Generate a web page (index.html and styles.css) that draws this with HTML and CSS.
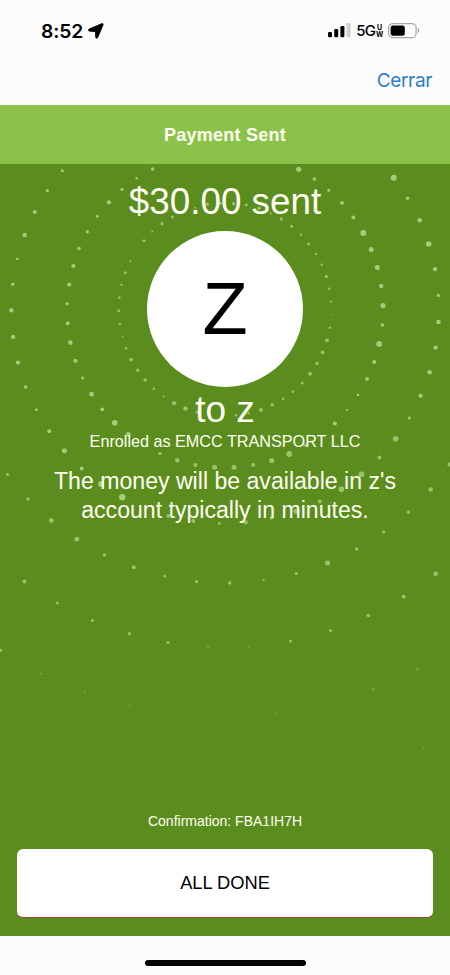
FILE: index.html
```html
<!DOCTYPE html>
<html lang="es">
<head>
<meta charset="utf-8">
<meta name="viewport" content="width=device-width, initial-scale=1">
<title>Payment Sent</title>
<link rel="stylesheet" href="styles.css">
</head>
<body>
<div class="phone">
  <header class="status">
    <div class="clock"><span class="time">8:52</span>
      <svg class="arrow" width="16" height="16" viewBox="0 0 16 16"><path d="M13.8.7 1.2 6.1C.2 6.6.4 8 1.5 8.1l5.7.3.4.4.2 5.5c.1 1.1 1.3 1.3 1.8.3L15 1.9c.4-.9-.3-1.6-1.2-1.2Z"/></svg>
    </div>
    <div class="signals">
      <svg class="bars" width="23" height="16" viewBox="0 0 23 16"><rect y="9" width="4" height="5.3" rx="1.2"/><rect x="6.2" y="6" width="4" height="8.3" rx="1.2"/><rect x="12.4" y="3" width="4" height="11.3" rx="1.2"/><rect class="weak" x="18.6" width="4" height="14.3" rx="1.2"/></svg>
      <span class="network">5G</span><span class="uw"><span>U</span><span>W</span></span>
      <svg class="battery" width="32" height="16" viewBox="0 0 32 16"><rect class="shell" x=".6" y=".6" width="27.5" height="14" rx="4.2"/><rect x="2.6" y="2.4" width="14.2" height="10.4" rx="2.4"/><path class="cap" d="M29.7 5.1c2.2.9 2.2 4.3 0 5.1Z"/></svg>
    </div>
  </header>
  <nav class="nav"><a class="close">Cerrar</a></nav>
  <h1 class="banner"><span>Payment Sent</span></h1>
  <main class="content">
    <svg class="dots" width="450" height="772" viewBox="0 164 450 772" aria-hidden="true">
      <g>
        <circle cx="62.3" cy="170.7" r="1.5"/><circle cx="152.7" cy="169" r="1.8"/><circle cx="136.7" cy="178.3" r="1.2"/><circle cx="122" cy="189.3" r="1.6"/><circle cx="109" cy="202.3" r="2.1"/><circle cx="97.3" cy="216.3" r="1.5"/><circle cx="87.3" cy="231.7" r="1.7"/><circle cx="79" cy="248.5" r="1.8"/>
        <circle cx="47.3" cy="190.7" r="1.6"/><circle cx="34.7" cy="212" r="2"/><circle cx="24.7" cy="235" r="2.2"/><circle cx="17.3" cy="259" r="1.3"/><circle cx="12.8" cy="284.2" r="1.7"/><circle cx="11.3" cy="310.3" r="2.2"/><circle cx="13.1" cy="336.9" r="2.2"/><circle cx="18" cy="362.6" r="2.1"/><circle cx="25.7" cy="387" r="1.8"/><circle cx="36.3" cy="409.8" r="1.4"/>
        <circle cx="73.3" cy="266" r="2.1"/><circle cx="69.2" cy="284.5" r="2.1"/><circle cx="67.2" cy="303.7" r="1.7"/><circle cx="67.7" cy="323.3" r="2"/><circle cx="70.4" cy="342.6" r="2.3"/><circle cx="75.5" cy="360.8" r="2"/><circle cx="82.7" cy="378" r="1.5"/><circle cx="91.6" cy="394.2" r="2.4"/><circle cx="102.2" cy="409.3" r="1.9"/>
        <circle cx="49.2" cy="431.2" r="2"/><circle cx="64.4" cy="450.8" r="2.5"/><circle cx="81.7" cy="468.4" r="2"/><circle cx="101" cy="484" r="2.9"/><circle cx="122.2" cy="497.2" r="3.2"/><circle cx="114.7" cy="422.7" r="2.8"/><circle cx="128.3" cy="434.5" r="2.4"/>
        <circle cx="298.7" cy="169.3" r="2.6"/><circle cx="314.3" cy="179" r="1.8"/><circle cx="328.7" cy="190.3" r="1.5"/><circle cx="342" cy="203" r="1.9"/><circle cx="353.3" cy="217.3" r="1.9"/><circle cx="363.3" cy="233" r="3"/><circle cx="371.2" cy="249.6" r="2.5"/><circle cx="377.3" cy="267.4" r="2.5"/><circle cx="381.2" cy="286" r="2.2"/><circle cx="383" cy="305.6" r="2.6"/><circle cx="382.3" cy="325" r="1.8"/><circle cx="379.2" cy="344" r="2.9"/><circle cx="374.2" cy="362" r="2"/><circle cx="367.1" cy="379" r="1.9"/><circle cx="358" cy="395" r="1.3"/><circle cx="347" cy="410" r="1"/><circle cx="334.8" cy="423.5" r="2.1"/>
        <circle cx="393.7" cy="177.7" r="3"/><circle cx="407.7" cy="198.3" r="1.8"/><circle cx="419.7" cy="220.3" r="2.3"/><circle cx="428.7" cy="244" r="2.8"/><circle cx="435" cy="269.2" r="2.1"/><circle cx="438.4" cy="295.4" r="1.6"/><circle cx="438.5" cy="322" r="2.3"/><circle cx="435.6" cy="347.6" r="2.2"/><circle cx="429.6" cy="372.3" r="2.2"/><circle cx="420.6" cy="395.8" r="2.1"/><circle cx="409.4" cy="418" r="1.5"/>
      </g>
      <g class="soft">
        <circle cx="172.3" cy="217" r="1.6"/><circle cx="162" cy="223.7" r="1.6"/><circle cx="152.3" cy="231.3" r="1"/><circle cx="144" cy="240.7" r="1.5"/><circle cx="130.3" cy="261.3" r="1"/><circle cx="125.2" cy="272.8" r="1.5"/><circle cx="121.5" cy="284.7" r="1.2"/><circle cx="119.3" cy="297.6" r="1.3"/><circle cx="118.7" cy="310.8" r="1.5"/><circle cx="119.8" cy="323.7" r="1.3"/><circle cx="122.5" cy="336.7" r=".8"/><circle cx="126" cy="348.3" r="1.3"/><circle cx="131.2" cy="359.6" r="1.9"/><circle cx="137.7" cy="370.2" r="1.6"/><circle cx="145.2" cy="380" r="1.8"/><circle cx="153.8" cy="388.7" r="1.3"/><circle cx="163.6" cy="396.4" r="1"/><circle cx="174.1" cy="403.1" r="2.2"/><circle cx="185.5" cy="408.5" r="2.2"/><circle cx="197.3" cy="412.2" r="1.6"/>
        <circle cx="195.3" cy="207.7" r="1"/><circle cx="207.3" cy="204.3" r="1.7"/><circle cx="220.3" cy="203.3" r="1.6"/><circle cx="233.7" cy="203.7" r="1.8"/><circle cx="246.3" cy="205" r="1.6"/><circle cx="259" cy="208.3" r="1.8"/><circle cx="270.7" cy="213.3" r="1"/><circle cx="281.3" cy="219" r="1.7"/><circle cx="291.7" cy="226.3" r="1.5"/><circle cx="301" cy="234.7" r="1.2"/><circle cx="308.7" cy="244" r="1.5"/><circle cx="315.8" cy="254" r="1.2"/><circle cx="321.7" cy="264.8" r="1.2"/><circle cx="326.4" cy="276.6" r="1.6"/><circle cx="329.3" cy="288.8" r="1.3"/><circle cx="331.2" cy="301.7" r="1.1"/><circle cx="331.8" cy="314.6" r=".6"/><circle cx="329.8" cy="327.8" r="1.3"/><circle cx="327" cy="340.4" r="1.9"/><circle cx="322.6" cy="352.3" r="1.9"/><circle cx="317" cy="363.5" r="1.8"/><circle cx="310" cy="373.8" r="1.9"/><circle cx="302.2" cy="383.2" r="1.4"/><circle cx="292.9" cy="391.6" r="1.4"/><circle cx="283.2" cy="398.8" r="1.4"/><circle cx="272.3" cy="404.8" r="1.8"/><circle cx="261" cy="410" r="2"/><circle cx="248.6" cy="413.2" r="1.2"/><circle cx="236" cy="415.3" r="1.3"/>
        <circle cx="160" cy="453.4" r="1.7"/><circle cx="177.2" cy="460.2" r="2.3"/><circle cx="195.4" cy="465" r="2.1"/><circle cx="214.5" cy="467.3" r="2.5"/><circle cx="234.1" cy="467.3" r="2.5"/><circle cx="253.2" cy="465" r="2"/><circle cx="271.7" cy="460.6" r="2.6"/><circle cx="289.2" cy="454" r="2.9"/><circle cx="305.3" cy="445.3" r="1.7"/>
        <circle cx="395.7" cy="438.7" r="2.8"/><circle cx="379.5" cy="457.5" r="1.9"/><circle cx="361.5" cy="474.2" r="2.8"/><circle cx="341.4" cy="489.2" r="2.8"/><circle cx="319.7" cy="501.4" r="2"/><circle cx="296" cy="511.3" r="2.5"/><circle cx="271.5" cy="518" r="1.8"/><circle cx="245.7" cy="522.4" r="2.1"/><circle cx="219.3" cy="523.5" r="1.4"/><circle cx="193.3" cy="521" r="2"/><circle cx="168.3" cy="516" r="2"/>
        <circle cx="7.5" cy="474.6" r="1.5"/><circle cx="28" cy="499" r="1.7"/><circle cx="51.3" cy="520.4" r="2.4"/><circle cx="76.8" cy="539.2" r="2.4"/><circle cx="104.4" cy="555" r="1.7"/><circle cx="133.8" cy="567.2" r="2"/><circle cx="164.6" cy="576.2" r="1.4"/><circle cx="196.6" cy="581.5" r="1.6"/><circle cx="229.7" cy="583" r="1.8"/><circle cx="263.6" cy="580.2" r="1.1"/><circle cx="296.3" cy="573.5" r="1.6"/><circle cx="327.5" cy="563" r="2.5"/><circle cx="356.6" cy="549" r="1.7"/><circle cx="383.7" cy="532.1" r="1.7"/><circle cx="408.5" cy="512.2" r="1.6"/><circle cx="430.6" cy="489.5" r="2.3"/><circle cx="449.5" cy="464.5" r="2"/>
        <circle cx="24.4" cy="581.5" r="2"/><circle cx="57.3" cy="603" r="1.5"/><circle cx="92.3" cy="620.5" r="1.6"/><circle cx="129.4" cy="633.7" r="1.6"/><circle cx="168" cy="642.6" r="1.5"/><circle cx="290.5" cy="641.2" r="1.4"/><circle cx="330.5" cy="630.5" r="1.6"/><circle cx="368.4" cy="615.5" r="1.8"/><circle cx="403.6" cy="596.7" r="2"/><circle cx="435.7" cy="573.7" r="2.3"/><circle cx=".8" cy="650.3" r="1.5"/>
      </g>
      <g class="faint"><circle cx="208.2" cy="647" r="1.4"/><circle cx="249" cy="646.5" r="1.3"/><circle cx="41.4" cy="673.8" r="1.3"/><circle cx="84.8" cy="692.5" r="1.2"/><circle cx="130" cy="705.5" r="1"/><circle cx="275.6" cy="714" r=".9"/><circle cx="373" cy="689.4" r="1.5"/><circle cx="417.4" cy="669" r="1.5"/><circle cx="423.4" cy="748.7" r="1"/><circle cx="368.4" cy="770.7" r=".8"/></g>
    </svg>
    <p class="amount"><span>$30.00 sent</span></p>
    <div class="avatar">
      <span class="initial">Z</span>
    </div>
    <p class="payee">to z</p>
    <p class="enrolled"><span>Enrolled as EMCC TRANSPORT LLC</span></p>
    <p class="message"><span>The money will be available in z's</span><br><span>account typically in minutes.</span></p>
    <p class="confirmation"><span>Confirmation: FBA1IH7H</span></p>
    <button class="done" type="button"><span>ALL DONE</span></button>
  </main>
  <footer class="home"><div class="indicator"></div></footer>
</div>
</body>
</html>
```

FILE: styles.css
```css
* { box-sizing: border-box; }
body, p, h1 { margin: 0; }
body { font-family: "Liberation Sans", Arial, sans-serif; background: #fcfcfc; }
.phone { width: 450px; height: 975px; display: flex; flex-direction: column; overflow: hidden; }
.status { height: 60px; padding: 1px 30px 0 41px; display: flex; align-items: center; justify-content: space-between; font-family: Inter, sans-serif; }
.clock, .signals { display: flex; align-items: center; }
.time { font-size: 19.3px; line-height: 24px; font-weight: 600; letter-spacing: -.1px; }
.arrow { margin-left: 5px; stroke: #000; stroke-width: 1px; stroke-linejoin: round; }
.bars { margin-right: 5px; }
.weak { fill: #d0d0d0; }
.network { font-size: 15px; font-weight: 500; letter-spacing: -.9px; }
.uw { display: flex; flex-direction: column; align-items: center; width: 7px; margin: 0 5px 0 1px; font-size: 7px; line-height: 7px; font-weight: 700; }
.uw span { height: 7px; }
.shell { fill: none; stroke: #a7a7a7; stroke-width: 1.2; }
.cap { fill: #a7a7a7; }
.nav { height: 45px; padding: 9px 18px 0 0; display: flex; justify-content: flex-end; }
.close { color: #2a7fcc; font-family: Inter, sans-serif; font-size: 19px; line-height: 24px; letter-spacing: -.35px; }
.banner { height: 59px; padding-top: 1px; background: #8bc34a; color: #fffff2; font-size: 18px; font-weight: 700; line-height: 58px; text-align: center; letter-spacing: .25px; }
.content { position: relative; height: 772px; background: #5a8d1d; color: #fffff2; display: flex; flex-direction: column; align-items: center; text-align: center; }
.dots { position: absolute; inset: 0; fill: #a5cc7b; filter: blur(.45px); }
.soft { opacity: .85; }
.faint { opacity: .35; }
.content > p, .avatar, .done { position: relative; }
.amount { margin-top: 16px; font-size: 36.8px; line-height: 44px; }
.avatar { width: 156px; height: 156px; margin-top: 7px; border-radius: 50%; background: #fff; color: #000; display: flex; align-items: center; justify-content: center; }
.initial { font-size: 74px; line-height: 80px; }
.payee { margin-top: 1px; font-size: 37px; line-height: 44px; }
.enrolled { margin-top: -1px; font-size: 16.2px; line-height: 20px; }
.message { margin-top: 16px; font-size: 23.1px; line-height: 29px; }
.confirmation { margin-top: auto; font-size: 14px; line-height: 20px; }
.done { width: 416px; height: 69px; margin: 18px 0 18px; padding: 0; border: 0; border-bottom: 1px solid #9b493c; border-radius: 6px; background: #fff; color: #000; font: 18.3px/66px "Liberation Sans", Arial, sans-serif; }
.home { height: 39px; display: flex; justify-content: center; padding-top: 24px; }
.indicator { width: 161px; height: 6px; border-radius: 3px; background: #000; }
```
